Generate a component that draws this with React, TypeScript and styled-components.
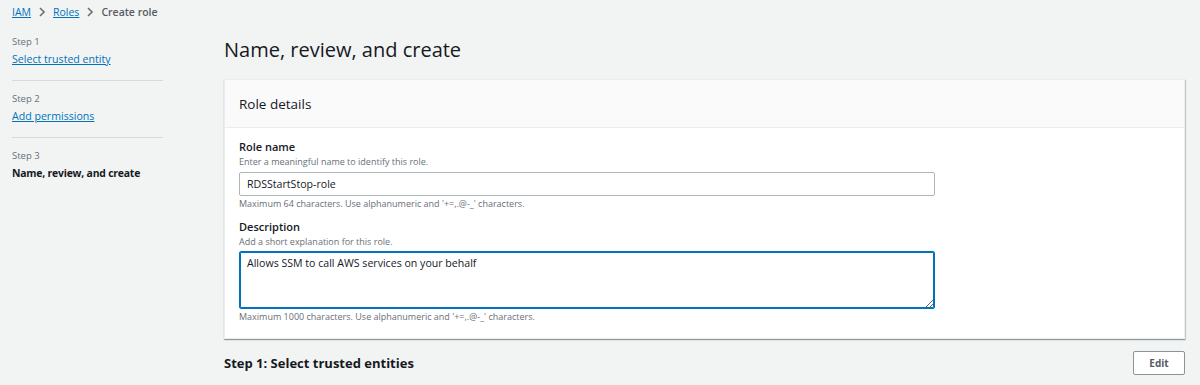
import React from "react";
import styled, { createGlobalStyle } from "styled-components";

const Global = createGlobalStyle`
  html, body { margin: 0; padding: 0; background: #f2f3f3; }
  body { font-family: "Open Sans", "Noto Sans", sans-serif; color: #16191f; }
  * { box-sizing: border-box; }
`;

const Page = styled.div`
  display: flex;
  flex-direction: column;
  width: 1200px;
  height: 385px;
  overflow: hidden;
`;

const Breadcrumbs = styled.nav`
  display: flex;
  align-items: center;
  height: 24px;
  padding-left: 12px;
  gap: 7px;
  font-size: 10.5px;
`;

const Crumb = styled.a`
  color: #0073bb;
  text-decoration: underline;
`;

const Current = styled.span`
  color: #545b64;
  font-weight: 600;
`;

const Chevron = () => (
  <svg width="8" height="10" viewBox="0 0 8 10" fill="none">
    <path d="M2 1l4 4-4 4" stroke="#687078" strokeWidth="1.6" />
  </svg>
);

const Body = styled.div`
  display: flex;
  flex: 1;
`;

const SideNav = styled.aside`
  width: 224px;
  padding: 11px 61px 0 12px;
  display: flex;
  flex-direction: column;
`;

const StepBlock = styled.div<{ $last?: boolean }>`
  display: flex;
  flex-direction: column;
  gap: 2px;
  padding-bottom: ${(p) => (p.$last ? "0" : "13px")};
  margin-bottom: ${(p) => (p.$last ? "0" : "11px")};
  border-bottom: ${(p) => (p.$last ? "none" : "1px solid #d5dbdb")};
`;

const StepLabel = styled.span`
  font-size: 9.5px;
  line-height: 14px;
  color: #687078;
`;

const StepLink = styled.a`
  font-size: 10.6px;
  line-height: 16px;
  color: #0073bb;
  text-decoration: underline;
`;

const StepCurrent = styled.span`
  font-size: 10.4px;
  line-height: 16px;
  font-weight: 700;
  letter-spacing: -0.2px;
  color: #16191f;
`;

const Main = styled.main`
  flex: 1;
  padding: 12px 15px 0 0;
  display: flex;
  flex-direction: column;
`;

const Title = styled.h1`
  margin: 0 0 15px;
  font-size: 20px;
  line-height: 28px;
  font-weight: 400;
  color: #16191f;
`;

const Card = styled.section`
  background: #fff;
  border: 1px solid #eaeded;
  box-shadow: 0 1px 1px 0 rgba(0, 28, 36, 0.3), 1px 1px 1px 0 rgba(0, 28, 36, 0.15);
`;

const CardHeader = styled.header`
  height: 48px;
  display: flex;
  align-items: center;
  padding: 0 14px;
  background: #fafafa;
  border-bottom: 1px solid #eaeded;
`;

const CardTitle = styled.h2`
  margin: 0;
  font-size: 13.5px;
  font-weight: 400;
  color: #16191f;
`;

const CardBody = styled.div`
  padding: 11px 14px 14px;
  display: flex;
  flex-direction: column;
`;

const Field = styled.div<{ $gap?: number }>`
  display: flex;
  flex-direction: column;
  margin-top: ${(p) => p.$gap ?? 0}px;
`;

const Label = styled.label`
  font-size: 11px;
  line-height: 16px;
  font-weight: 600;
  color: #16191f;
`;

const Hint = styled.span`
  font-size: 9px;
  line-height: 14px;
  color: #687078;
`;

const Constraint = styled.span`
  font-size: 9px;
  line-height: 14px;
  color: #687078;
  margin-top: 1px;
`;

const TextInput = styled.input`
  width: 696px;
  height: 24px;
  margin-top: 3px;
  padding: 0 7px;
  border: 1px solid #aab7b8;
  border-radius: 2px;
  font-family: inherit;
  font-size: 10.6px;
  color: #16191f;
  background: #fff;
  outline: none;
`;

const TextArea = styled.textarea`
  display: block;
  width: 696px;
  height: 58px;
  margin-top: 2px;
  padding: 3px 7px;
  border: 1px solid #0073bb;
  box-shadow: 0 0 0 1px #0073bb inset;
  border-radius: 2px;
  font-family: inherit;
  font-size: 10.6px;
  line-height: 16px;
  color: #16191f;
  background: #fff;
  outline: none;
  resize: vertical;
`;

const SectionRow = styled.div`
  margin-top: 12px;
  display: flex;
  align-items: center;
  justify-content: space-between;
`;

const SectionTitle = styled.h2`
  margin: 0;
  font-size: 13px;
  font-weight: 700;
  color: #16191f;
`;

const Button = styled.button`
  width: 52px;
  height: 24px;
  border: 1px solid #879596;
  border-radius: 2px;
  background: #fff;
  font-family: inherit;
  font-size: 10px;
  font-weight: 700;
  color: #545b64;
`;

export default function App() {
  return (
    <>
      <Global />
      <Page>
        <Breadcrumbs>
          <Crumb>IAM</Crumb>
          <Chevron />
          <Crumb>Roles</Crumb>
          <Chevron />
          <Current>Create role</Current>
        </Breadcrumbs>
        <Body>
          <SideNav>
            <StepBlock>
              <StepLabel>Step 1</StepLabel>
              <StepLink>Select trusted entity</StepLink>
            </StepBlock>
            <StepBlock>
              <StepLabel>Step 2</StepLabel>
              <StepLink>Add permissions</StepLink>
            </StepBlock>
            <StepBlock $last>
              <StepLabel>Step 3</StepLabel>
              <StepCurrent>Name, review, and create</StepCurrent>
            </StepBlock>
          </SideNav>
          <Main>
            <Title>Name, review, and create</Title>
            <Card>
              <CardHeader>
                <CardTitle>Role details</CardTitle>
              </CardHeader>
              <CardBody>
                <Field>
                  <Label>Role name</Label>
                  <Hint>Enter a meaningful name to identify this role.</Hint>
                  <TextInput defaultValue="RDSStartStop-role" />
                  <Constraint>Maximum 64 characters. Use alphanumeric and '+=,.@-_' characters.</Constraint>
                </Field>
                <Field $gap={8}>
                  <Label>Description</Label>
                  <Hint>Add a short explanation for this role.</Hint>
                  <TextArea defaultValue="Allows SSM to call AWS services on your behalf" />
                  <Constraint>Maximum 1000 characters. Use alphanumeric and '+=,.@-_' characters.</Constraint>
                </Field>
              </CardBody>
            </Card>
            <SectionRow>
              <SectionTitle>Step 1: Select trusted entities</SectionTitle>
              <Button>Edit</Button>
            </SectionRow>
          </Main>
        </Body>
      </Page>
    </>
  );
}
